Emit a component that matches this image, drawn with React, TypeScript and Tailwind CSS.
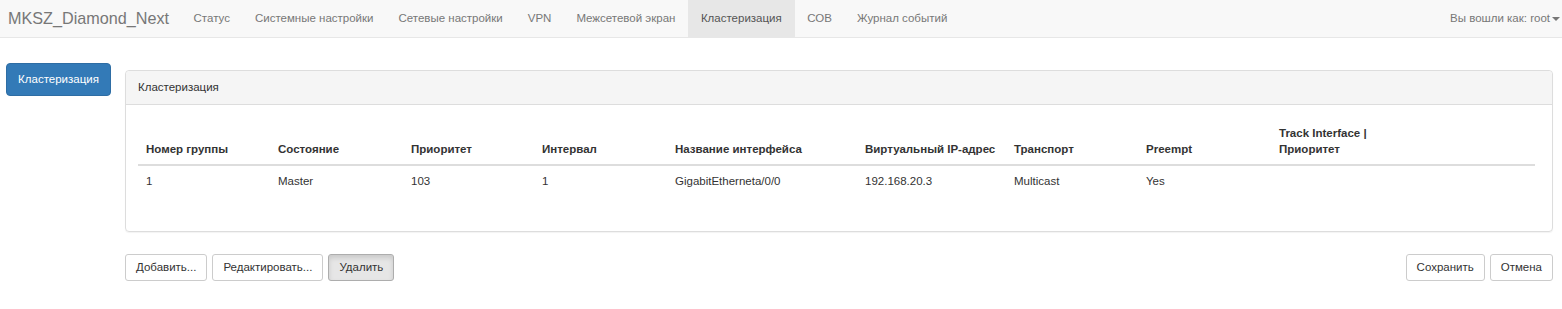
const navItems = [
  "Статус",
  "Системные настройки",
  "Сетевые настройки",
  "VPN",
  "Межсетевой экран",
  "Кластеризация",
  "СОВ",
  "Журнал событий",
];

const columns = [
  { title: "Номер группы", w: "w-[132px]" },
  { title: "Состояние", w: "w-[133px]" },
  { title: "Приоритет", w: "w-[131px]" },
  { title: "Интервал", w: "w-[133px]" },
  { title: "Название интерфейса", w: "w-[190px]" },
  { title: "Виртуальный IP-адрес", w: "w-[149px]" },
  { title: "Транспорт", w: "w-[132px]" },
  { title: "Preempt", w: "w-[133px]" },
];

const rows = [
  ["1", "Master", "103", "1", "GigabitEtherneta/0/0", "192.168.20.3", "Multicast", "Yes", ""],
];

function Btn({ label, active }: { label: string; active?: boolean }) {
  return (
    <button
      className={
        active
          ? "px-[10px] py-[5px] text-[11.5px] leading-[15px] text-[#333] bg-[#e6e6e6] border border-[#adadad] rounded-[3px] shadow-[inset_0_3px_5px_rgba(0,0,0,0.125)]"
          : "px-[10px] py-[5px] text-[11.5px] leading-[15px] text-[#333] bg-white border border-[#ccc] rounded-[3px]"
      }
    >
      {label}
    </button>
  );
}

export default function App() {
  return (
    <div className="min-h-[309px] bg-white text-[#333] text-[11.5px] font-['Liberation_Sans',Arial,sans-serif]">
      {/* top navbar */}
      <nav className="h-[38px] flex items-stretch bg-[#f8f8f8] border-b border-[#e7e7e7]">
        <a className="pl-[8px] pr-[12px] flex items-center text-[16.2px] text-[#777]">
          MKSZ_Diamond_Next
        </a>
        <ul className="flex items-stretch">
          {navItems.map((item) => (
            <li
              key={item}
              className={
                item === "Кластеризация"
                  ? "px-[13px] flex items-center bg-[#e7e7e7] text-[#555]"
                  : "px-[12.5px] flex items-center text-[#777]"
              }
            >
              {item}
            </li>
          ))}
        </ul>
        <div className="ml-auto pr-[2px] flex items-center text-[#777]">
          Вы вошли как: root
          <span className="ml-[2px] inline-block w-0 h-0 border-x-[4px] border-x-transparent border-t-[4px] border-t-[#777]" />
        </div>
      </nav>

      <div className="flex gap-[14px] pl-[6px] pr-[9px]">
        {/* sidebar */}
        <div className="w-[105px] shrink-0 pt-[25px]">
          <div className="h-[33px] flex items-center justify-center bg-[#337ab7] border border-[#2e6da4] rounded-[4px] text-white">
            Кластеризация
          </div>
        </div>

        {/* content */}
        <div className="flex-1 pt-[32px]">
          <div className="border border-[#ddd] rounded-[4px] shadow-[0_1px_1px_rgba(0,0,0,0.05)]">
            <div className="h-[34px] flex items-center px-[12px] bg-[#f5f5f5] border-b border-[#ddd] rounded-t-[4px]">
              Кластеризация
            </div>
            <div className="pt-[12px] pl-[12px] pr-[17px] pb-[35px]">
              <table className="w-full table-fixed border-collapse text-left">
                <thead>
                  <tr className="border-b-2 border-[#ddd]">
                    {columns.map((c) => (
                      <th key={c.title} className={`${c.w} align-bottom whitespace-nowrap px-[8px] pt-[8px] pb-[7px] leading-[16px] font-bold`}>
                        {c.title}
                      </th>
                    ))}
                    <th className="align-bottom px-[8px] pt-[8px] pb-[7px] leading-[16px] font-bold">
                      Track Interface |
                      <br />
                      Приоритет
                    </th>
                  </tr>
                </thead>
                <tbody>
                  {rows.map((r, i) => (
                    <tr key={i}>
                      {r.map((cell, j) => (
                        <td key={j} className="px-[8px] py-[7px] leading-[16px]">
                          {cell}
                        </td>
                      ))}
                    </tr>
                  ))}
                </tbody>
              </table>
            </div>
          </div>

          <div className="mt-[22px] flex items-center">
            <div className="flex gap-[5px]">
              <Btn label="Добавить..." />
              <Btn label="Редактировать..." />
              <Btn label="Удалить" active />
            </div>
            <div className="ml-auto flex gap-[5px]">
              <Btn label="Сохранить" />
              <Btn label="Отмена" />
            </div>
          </div>
        </div>
      </div>
    </div>
  );
}
